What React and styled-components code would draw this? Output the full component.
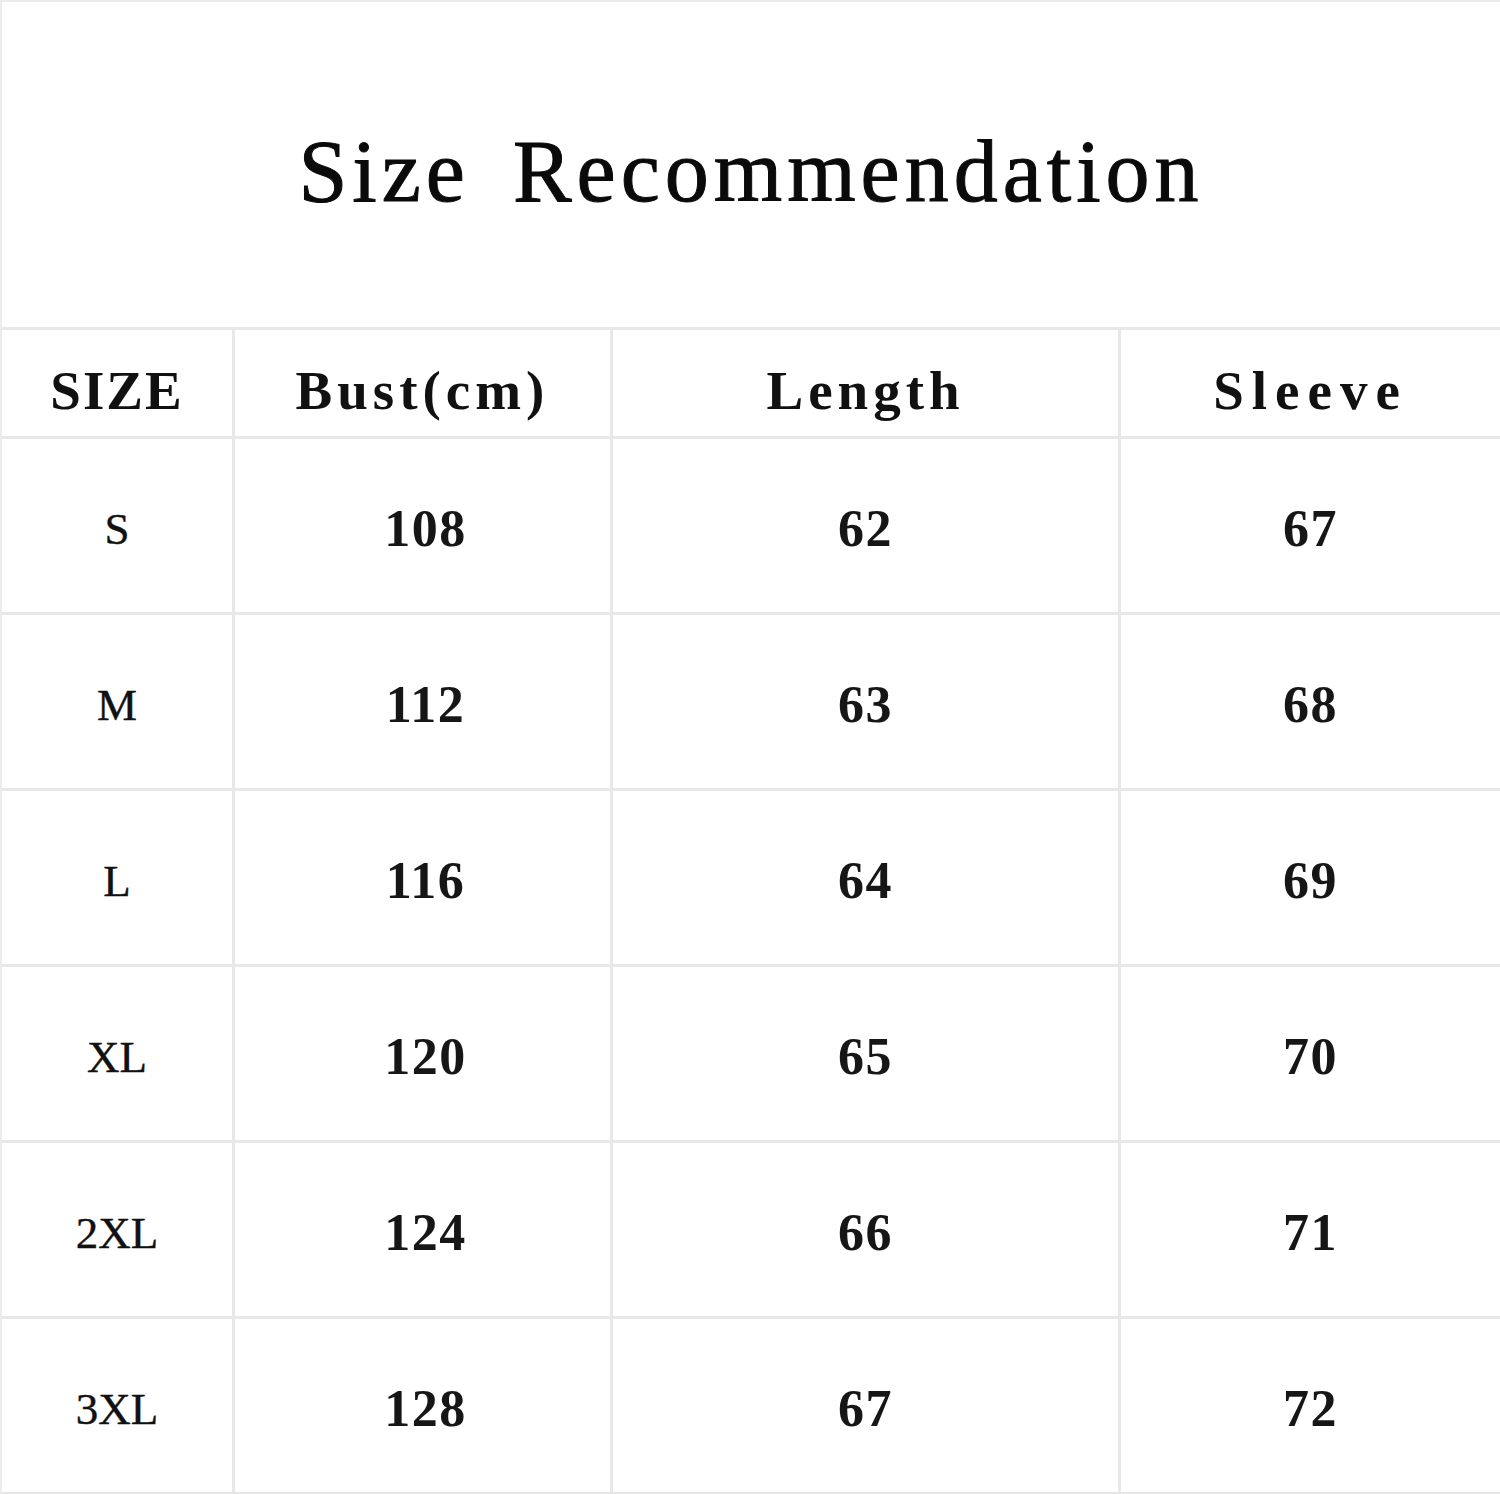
import React from "react";
import styled, { createGlobalStyle } from "styled-components";

const Global = createGlobalStyle`
  html, body { margin: 0; padding: 0; background: #fff; }
  #root { width: 1500px; }
`;

const Page = styled.div`
  width: 1500px;
  height: 1494px;
  box-sizing: border-box;
  border-top: 2px solid #ececec;
  border-left: 2px solid #ececec;
  background: #fff;
  display: flex;
  flex-direction: column;
  color: #111;
`;

const TitleBar = styled.div`
  height: 325px;
  display: flex;
  align-items: center;
  justify-content: center;
  padding-top: 14px;
  box-sizing: border-box;
`;

const Title = styled.h1`
  margin: 0;
  font-family: "Liberation Serif", "Times New Roman", serif;
  font-weight: 400;
  font-size: 88px;
  letter-spacing: 5px;
  word-spacing: 16px;
  line-height: 1;
  color: #0a0a0a;
  -webkit-text-stroke: 1px #0a0a0a;
`;

const Grid = styled.div`
  display: grid;
  grid-template-columns: 230px 378px 508px 382px;
  grid-template-rows: 109px repeat(6, 176px);
  border-bottom: 2px solid #e6e6e6;
`;

const Cell = styled.div`
  box-sizing: border-box;
  border-top: 3px solid #e8e8e8;
  border-left: ${(p) => (p.$first ? "0" : "3px solid #e8e8e8")};
  display: flex;
  align-items: center;
  justify-content: center;
  padding-top: ${(p) => (p.$head ? "14px" : "6px")};
  padding-left: ${(p) => (p.$num ? "6px" : "0")};
`;

const HeadText = styled.span`
  font-family: "Liberation Serif", "Times New Roman", serif;
  font-weight: 700;
  font-size: 55px;
  letter-spacing: ${(p) => p.$ls || "4px"};
  color: #111;
`;

const SizeText = styled.span`
  font-family: "Liberation Serif", "Times New Roman", serif;
  font-weight: 400;
  font-size: 45px;
  letter-spacing: 0;
  color: #111;
  -webkit-text-stroke: 0.4px #111;
`;

const NumText = styled.span`
  font-family: "Liberation Serif", "Times New Roman", serif;
  font-weight: 700;
  font-size: 52px;
  letter-spacing: 1.5px;
  color: #161616;
`;

const headers = [
  ["SIZE", "2px"],
  ["Bust(cm)", "5px"],
  ["Length", "5px"],
  ["Sleeve", "8px"],
];
const rows = [
  ["S", "108", "62", "67"],
  ["M", "112", "63", "68"],
  ["L", "116", "64", "69"],
  ["XL", "120", "65", "70"],
  ["2XL", "124", "66", "71"],
  ["3XL", "128", "67", "72"],
];

export default function App() {
  return (
    <>
      <Global />
      <Page>
        <TitleBar>
          <Title>Size Recommendation</Title>
        </TitleBar>
        <Grid>
          {headers.map(([h, ls], i) => (
            <Cell key={h} $head $first={i === 0}>
              <HeadText $ls={ls}>{h}</HeadText>
            </Cell>
          ))}
          {rows.map((r) =>
            r.map((v, i) => (
              <Cell key={r[0] + i} $first={i === 0} $num={i === 1}>
                {i === 0 ? <SizeText>{v}</SizeText> : <NumText>{v}</NumText>}
              </Cell>
            ))
          )}
        </Grid>
      </Page>
    </>
  );
}
